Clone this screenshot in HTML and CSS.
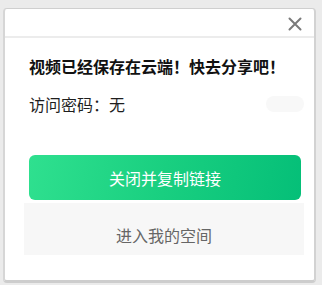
FILE: index.html
```html
<!DOCTYPE html>
<html lang="zh-CN">
<head>
<meta charset="utf-8">
<link rel="stylesheet" href="styles.css">
</head>
<body>
<div class="dialog">
  <div class="dialog-header">
    <svg class="close" width="14" height="14" viewBox="0 0 14 14">
      <path d="M1.5 1.5 L12.5 12.5 M12.5 1.5 L1.5 12.5" stroke="#7a7a7a" stroke-width="2" stroke-linecap="round" fill="none"/>
    </svg>
  </div>
  <div class="dialog-body">
    <div class="title">视频已经保存在云端！快去分享吧！</div>
    <div class="pwd-row">
      <span class="pwd">访问密码：无</span>
      <span class="toggle"></span>
    </div>
    <div class="btn-primary">关闭并复制链接</div>
    <div class="btn-secondary">进入我的空间</div>
  </div>
</div>
</body>
</html>
```
FILE: styles.css
```css
html, body {
  margin: 0;
  padding: 0;
}
body {
  background: #ebebeb;
  width: 322px;
  height: 285px;
  overflow: hidden;
  font-family: "Noto Sans CJK SC", "Noto Sans", sans-serif;
  padding-top: 8px;
  padding-left: 3px;
  box-sizing: border-box;
}
.dialog {
  width: 313px;
  height: 275px;
  box-sizing: border-box;
  background: #fff;
  border: 1px solid #cfcfcf;
  border-left: 2px solid #d6d6d6;
  border-right: 2px solid #d2d2d2;
  border-bottom: 3px solid #cdcdcd;
  border-radius: 4px;
  display: flex;
  flex-direction: column;
}
.dialog-header {
  height: 27px;
  border-bottom: 2px solid #ececec;
  display: flex;
  justify-content: flex-end;
  align-items: center;
  padding-right: 12px;
}
.close {
  display: block;
  margin-top: 2px;
}
.dialog-body {
  padding: 16px 10px 0 24px;
  display: flex;
  flex-direction: column;
}
.title {
  font-size: 16px;
  line-height: 24px;
  font-weight: bold;
  color: #111;
}
.pwd-row {
  margin-top: 14px;
  height: 24px;
  display: flex;
  align-items: center;
  justify-content: space-between;
}
.pwd {
  font-size: 16px;
  line-height: 24px;
  color: #1e1e1e;
}
.toggle {
  width: 38px;
  height: 16px;
  border-radius: 8px;
  background: #f8f8f8;
}
.btn-primary {
  margin-top: 39px;
  width: 272px;
  height: 45px;
  border-radius: 6px;
  background: linear-gradient(100deg, #2fe08f 0%, #19cf80 50%, #05bf78 100%);
  color: #fff;
  font-size: 16px;
  display: flex;
  align-items: center;
  justify-content: center;
}
.btn-secondary {
  margin-top: 3px;
  margin-left: -5px;
  width: 280px;
  height: 52px;
  background: #f7f7f7;
  color: #666;
  font-size: 16px;
  display: flex;
  align-items: center;
  justify-content: center;
  padding-top: 12px;
  box-sizing: border-box;
}
```
